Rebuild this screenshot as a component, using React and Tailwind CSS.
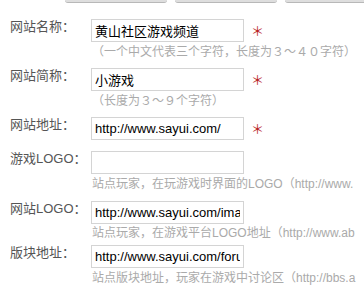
import React from 'react';

const rows = [
  {
    label: '网站名称：',
    value: '黄山社区游戏频道',
    required: true,
    hint: '（一个中文代表三个字符，长度为３～４０字符）',
    rowClass: 'mt-[16px]',
    hintClass: 'mt-[3px]',
  },
  {
    label: '网站简称：',
    value: '小游戏',
    required: true,
    hint: '（长度为３～９个字符）',
    rowClass: 'mt-[9px]',
    hintClass: 'mt-[3px]',
  },
  {
    label: '网站地址：',
    value: 'http://www.sayui.com/',
    required: true,
    rowClass: 'mt-[9px]',
  },
  {
    label: '游戏LOGO：',
    value: '',
    hint: '站点玩家，在玩游戏时界面的LOGO（http://www.',
    rowClass: 'mt-[11px]',
    hintClass: 'mt-[3px]',
  },
  {
    label: '网站LOGO：',
    value: 'http://www.sayui.com/images/logo.gif',
    hint: '站点玩家，在游戏平台LOGO地址（http://www.ab',
    rowClass: 'mt-[10px]',
    hintClass: 'mt-[2px]',
  },
  {
    label: '版块地址：',
    value: 'http://www.sayui.com/forum/',
    hint: '站点版块地址，玩家在游戏中讨论区（http://bbs.a',
    rowClass: 'mt-[5px]',
    hintClass: 'mt-[3px]',
  },
];

const FormRow = ({ label, value, required, hint, rowClass, hintClass }) => (
  <div className={`flex items-start ${rowClass}`}>
    <div className="w-[91px] shrink-0 pl-[10px] pt-[1px] text-[13px] leading-[14px] text-[#555]">
      {label}
    </div>
    <div className="min-w-0">
      <div className="flex items-start">
        <input
          readOnly
          defaultValue={value}
          className="h-[23px] w-[153px] border border-[#d4d4d4] bg-white px-[3px] text-[13px] text-black outline-none"
        />
        {required && (
          <span className="ml-[7px] mt-[6px] text-[13px] leading-[14px] text-[#b82525]">＊</span>
        )}
      </div>
      {hint && (
        <div className={`whitespace-nowrap pl-[1px] text-[12px] leading-[14px] text-[#aaa] ${hintClass}`}>
          {hint}
        </div>
      )}
    </div>
  </div>
);

export default function App() {
  return (
    <div className="relative h-[292px] w-[364px] overflow-hidden bg-white font-['Liberation_Sans','Noto_Sans_CJK_SC',sans-serif]">
      {/* bottoms of the buttons above */}
      <div className="flex h-[3px] gap-[8px] pl-[65px]">
        <div className="h-[3px] w-[102px] shrink-0 rounded-b-[3px] border-b border-[#b8b8b8] bg-[#dedede]" />
        <div className="h-[3px] w-[102px] shrink-0 rounded-b-[3px] border-b border-[#b8b8b8] bg-[#dedede]" />
        <div className="h-[3px] w-[102px] shrink-0 rounded-b-[3px] border-b border-[#b8b8b8] bg-[#dedede]" />
      </div>

      {rows.map((row) => (
        <FormRow key={row.label} {...row} />
      ))}
    </div>
  );
}
